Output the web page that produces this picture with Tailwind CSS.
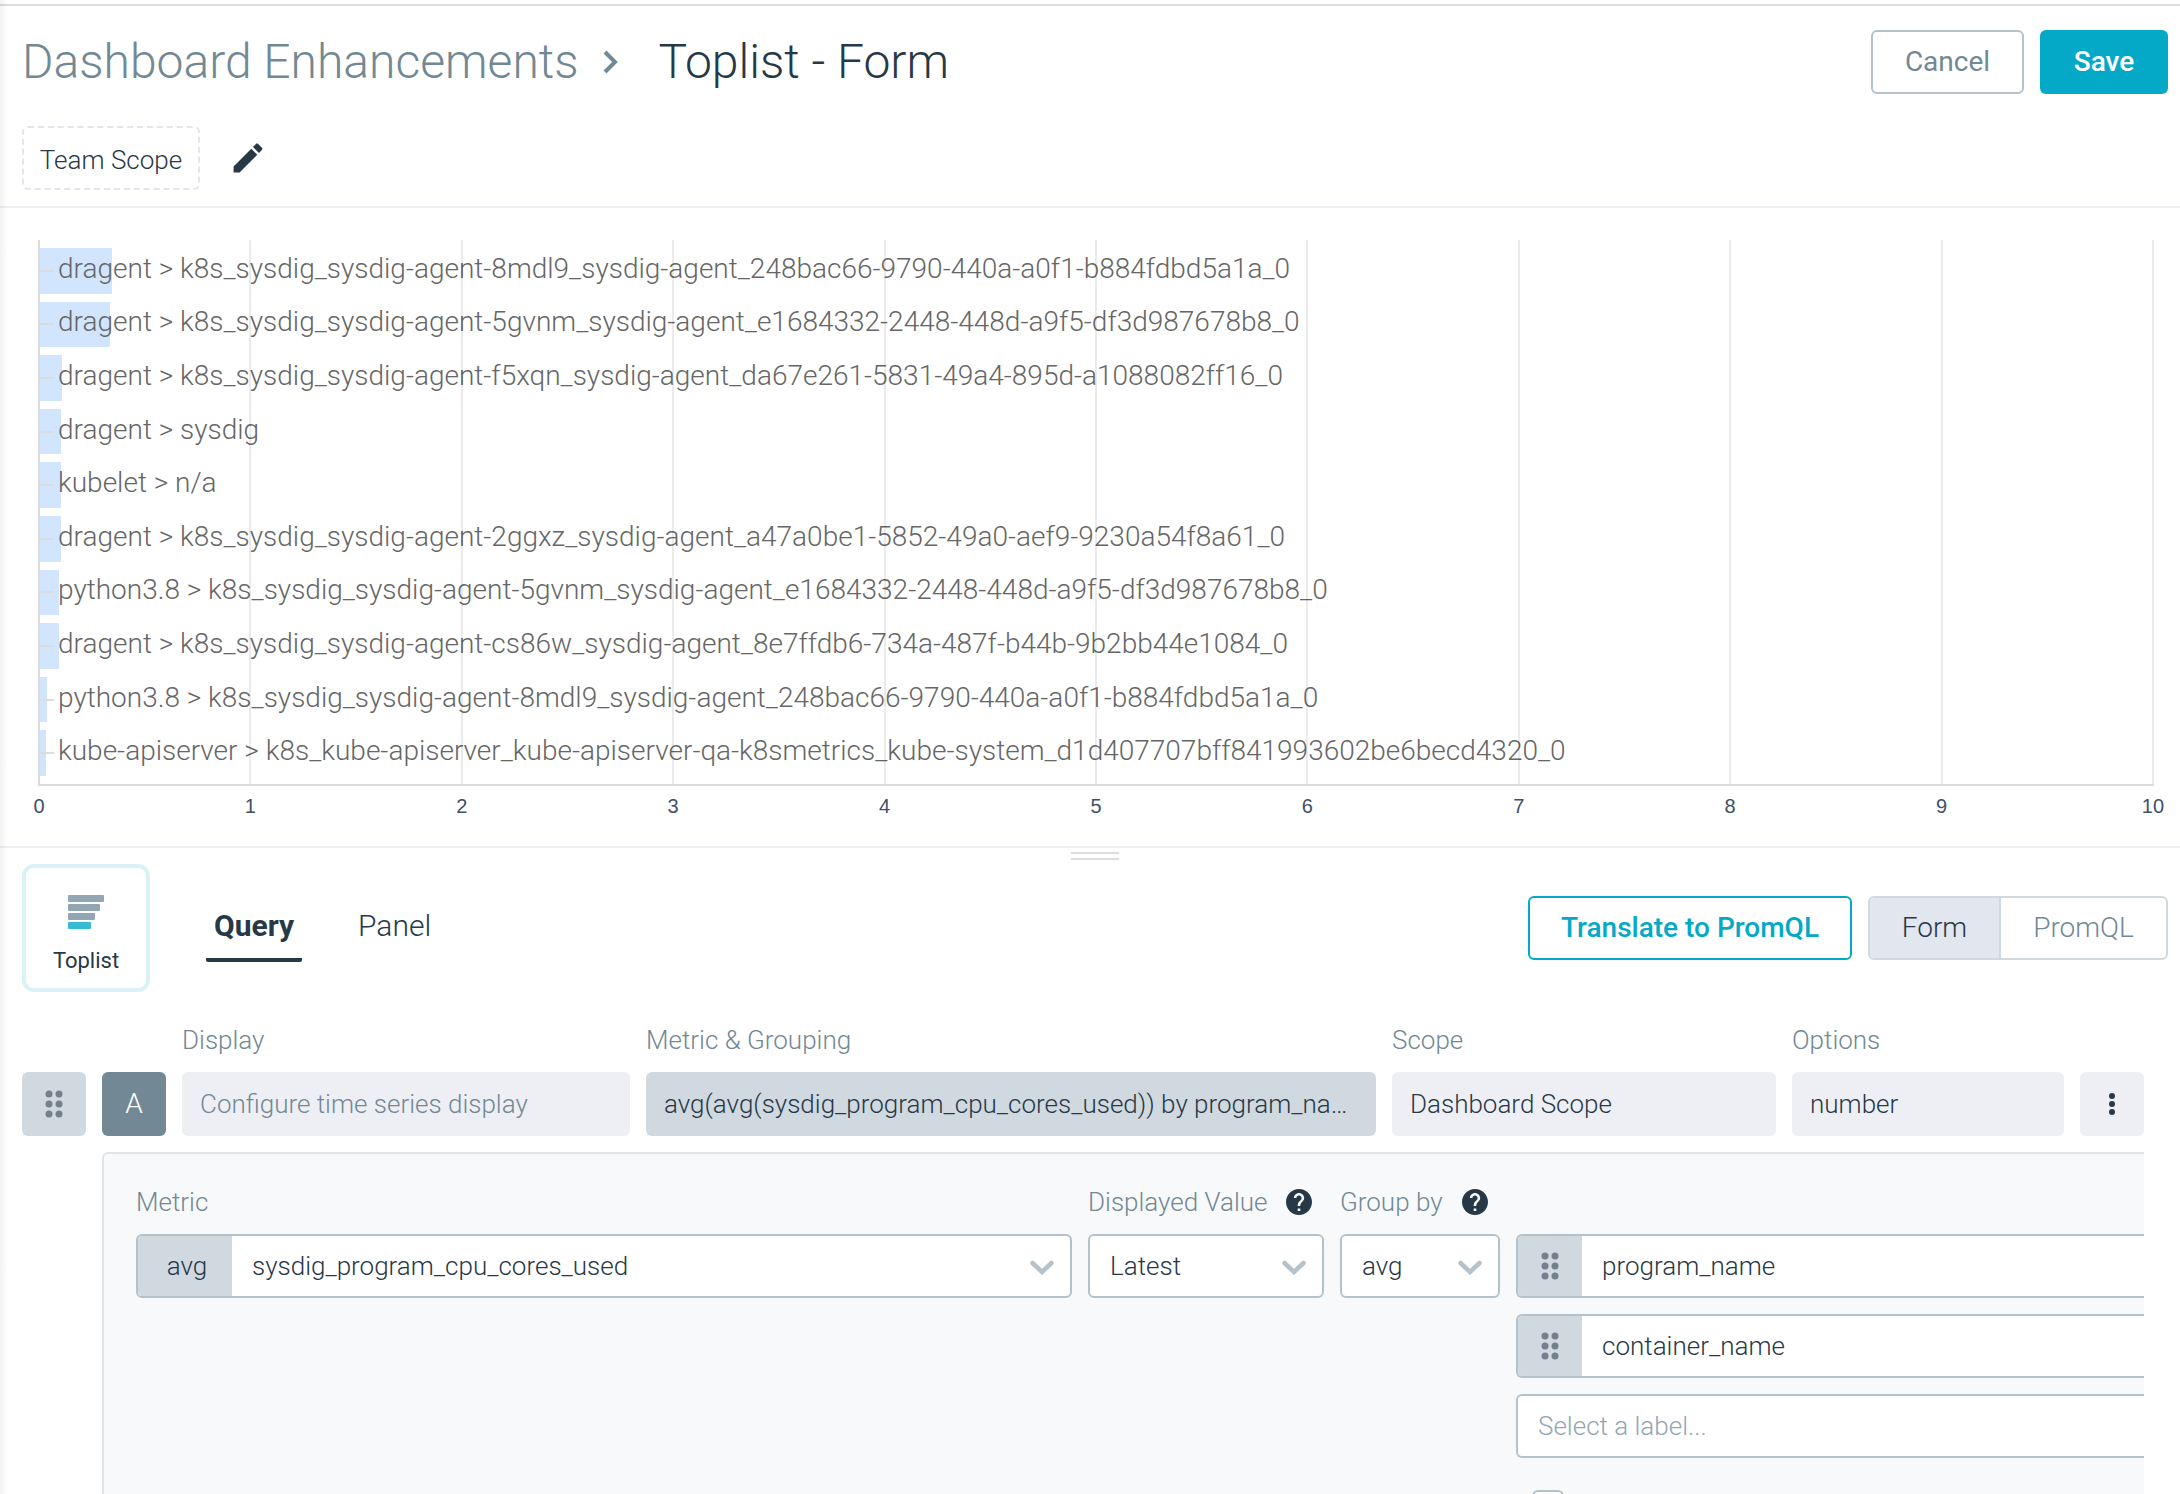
<!DOCTYPE html>
<html lang="en">
<head>
<meta charset="utf-8">
<title>Toplist - Form</title>
<script src="https://cdn.jsdelivr.net/npm/@tailwindcss/browser@4"></script>
</head>
<body class="h-screen overflow-hidden bg-white font-['Roboto',sans-serif] text-[26px] leading-8 font-light text-[#273847]">
<svg class="hidden">
  <symbol id="grip" viewBox="0 0 18 28"><g fill="#74808b"><circle cx="4" cy="4" r="3.5"/><circle cx="14" cy="4" r="3.5"/><circle cx="4" cy="14" r="3.5"/><circle cx="14" cy="14" r="3.5"/><circle cx="4" cy="24" r="3.5"/><circle cx="14" cy="24" r="3.5"/></g></symbol>
  <symbol id="chevron" viewBox="0 0 24 16"><path d="M2.500 3 12 12 21.500 3" fill="none" stroke="#b4c2cb" stroke-width="4.500" stroke-linecap="round"/></symbol>
  <symbol id="help" viewBox="2 2 20 20"><path fill="#273847" d="M12 2C6.480 2 2 6.480 2 12s4.480 10 10 10 10-4.480 10-10S17.520 2 12 2zm1 17h-2v-2h2v2zm2.070-7.750-.9.920C13.450 12.900 13 13.500 13 15h-2v-.5c0-1.100.450-2.100 1.170-2.830l1.240-1.260c.370-.360.590-.860.590-1.410 0-1.100-.9-2-2-2s-2 .9-2 2H8c0-2.210 1.790-4 4-4s4 1.790 4 4c0 .880-.360 1.680-.930 2.250z"/></symbol>
</svg>
<div class="relative flex h-full flex-col overflow-hidden pt-1">
  <div class="absolute inset-y-0 left-0 w-2 bg-linear-to-r from-black/5 to-transparent"></div>

  <header class="shrink-0 border-t-2 border-b-2 border-t-[#dcdcdc] border-b-[#eeeff4] pt-6 pr-3 pb-4 pl-[22px]">
    <div class="flex items-center justify-between">
      <nav class="flex items-center text-[48px] leading-16">
        <a href="#" class="text-[#728894]">Dashboard Enhancements</a>
        <svg class="mr-10 ml-6 h-6 w-4" viewBox="0 0 16 24" fill="none" stroke="#728894" stroke-width="4"><path d="M2 2 12 12 2 22"/></svg>
        <h1>Toplist - Form</h1>
      </nav>
      <div class="flex gap-4 text-[28px]">
        <button class="h-16 w-[153px] rounded-md border-2 border-[#b4c2cb] font-normal text-[#728894]">Cancel</button>
        <button class="h-16 w-32 rounded-md bg-[#04a9c7] font-medium text-white">Save</button>
      </div>
    </div>
    <div class="mt-8 flex items-center gap-8">
      <button class="h-16 w-[178px] rounded-md border-2 border-dashed border-[#e1e6ec] pt-1">Team Scope</button>
      <button aria-label="Edit scope"><svg class="size-8" viewBox="2 2 20 20"><path fill="#273847" d="M3 17.250V21h3.750L17.810 9.940l-3.750-3.750L3 17.250zM20.710 7.040c.390-.390.390-1.020 0-1.410l-2.340-2.340c-.390-.390-1.020-.390-1.410 0l-1.830 1.830 3.750 3.750 1.830-1.830z"/></svg></button>
    </div>
  </header>

  <section aria-label="Top list chart" class="shrink-0 border-b-2 border-[#eeeff4] pt-8 pr-[26px] pb-[26px] pl-[38px]">
    <div class="relative">
      <ul id="rows" class="grid h-[546px] grid-rows-10 border-b-2 border-l-2 border-[#dcdcdc] py-1 text-[28px] text-[#666]"></ul>
      <div class="absolute inset-0 bottom-0.5 left-0.5 grid grid-cols-10">
        <i class="border-r-2 border-black/8"></i><i class="border-r-2 border-black/8"></i><i class="border-r-2 border-black/8"></i><i class="border-r-2 border-black/8"></i><i class="border-r-2 border-black/8"></i><i class="border-r-2 border-black/8"></i><i class="border-r-2 border-black/8"></i><i class="border-r-2 border-black/8"></i><i class="border-r-2 border-black/8"></i><i class="border-r-2 border-black/8"></i>
      </div>
    </div>
    <div id="ticks" class="mx-px mt-1.5 flex justify-between font-['Liberation_Sans',sans-serif] text-[20px] leading-7 font-normal text-[#3f5068]"></div>
  </section>

  <main class="min-h-0 grow pl-[22px]">
    <div class="flex justify-center pt-1 pr-3"><div class="h-2 w-12 border-y-2 border-[#dcdcdc]"></div></div>
    <div class="mt-1 flex items-center pr-3">
      <button class="flex size-32 flex-col items-center rounded-xl border-4 border-[#d9f2f5] pt-[27px] text-[22px] leading-7 font-normal">
        <svg class="h-[34px] w-9" viewBox="0 0 36 34"><g fill="#92a6b3"><rect width="36" height="7" rx="1"/><rect y="9" width="32" height="7" rx="1"/><rect y="18" width="27" height="7" rx="1"/></g><rect y="27" width="23" height="7" rx="1" fill="#35bbd3"/></svg>
        <span class="mt-[18px]">Toplist</span>
      </button>
      <nav class="ml-14 flex gap-14 pt-2 text-[30px] leading-10">
        <a href="#" class="rounded-xs border-b-4 border-[#273847] px-2 pt-1 pb-3 font-bold">Query</a>
        <a href="#" class="pt-1">Panel</a>
      </nav>
      <div class="ml-auto flex gap-4 text-[28px]">
        <button class="h-16 w-[324px] rounded-md border-2 border-[#04a9c7] font-medium text-[#04a9c7]">Translate to PromQL</button>
        <div class="flex h-16 overflow-hidden rounded-md border-2 border-[#d0d8e0]">
          <button class="w-[131px] border-r-2 border-[#d0d8e0] bg-[#e2e6ee]">Form</button>
          <button class="w-[165px] text-[#728894]">PromQL</button>
        </div>
      </div>
    </div>

    <div class="mt-8 mr-9 grid grid-cols-[64px_64px_448fr_730fr_384fr_272fr_64px] gap-4">
      <span class="col-start-3 text-[#728894]">Display</span>
      <span class="text-[#728894]">Metric &amp; Grouping</span>
      <span class="text-[#728894]">Scope</span>
      <span class="text-[#728894]">Options</span>
      <button aria-label="Reorder query" class="col-start-1 flex h-16 items-center justify-center rounded-md bg-[#d0d8e0]"><svg class="h-7 w-[18px]"><use href="#grip"/></svg></button>
      <button class="h-16 rounded-md bg-[#728894] text-[28px] text-white">A</button>
      <button class="h-16 truncate rounded-md bg-[#eeeff4] px-[18px] text-left text-[#728894]">Configure time series display</button>
      <button class="h-16 truncate rounded-md bg-[#d0d8e0] px-[18px] text-left">avg(avg(sysdig_program_cpu_cores_used)) by program_na…</button>
      <button class="h-16 truncate rounded-md bg-[#eeeff4] px-[18px] text-left">Dashboard Scope</button>
      <button class="h-16 truncate rounded-md bg-[#eeeff4] px-[18px] text-left">number</button>
      <button aria-label="More" class="flex h-16 items-center justify-center rounded-md bg-[#eeeff4]"><svg class="h-6 w-2" viewBox="0 0 8 24" fill="#273847"><circle cx="4" cy="4" r="3"/><circle cx="4" cy="12" r="3"/><circle cx="4" cy="20" r="3"/></svg></button>
    </div>

    <div class="mt-4 mr-9 ml-20 flex h-96 gap-4 overflow-hidden rounded-tl-md border-t-2 border-l-2 border-[#dfe5e9] bg-[#f7f9fb] pt-8 pl-8">
      <div class="min-w-0 grow">
        <label for="metric" class="block text-[#728894]">Metric</label>
        <div class="mt-4 flex h-16 overflow-hidden rounded-md border-2 border-[#b4c2cb] bg-white">
          <button class="w-[94px] shrink-0 bg-[#d0d8e0] pl-1">avg</button>
          <div class="relative grow">
            <select id="metric" class="size-full appearance-none pl-5"><option>sysdig_program_cpu_cores_used</option></select>
            <svg class="pointer-events-none absolute top-6 right-4 h-4 w-6"><use href="#chevron"/></svg>
          </div>
        </div>
      </div>
      <div class="w-[236px] shrink-0">
        <div class="flex items-center justify-between pr-3 text-[#728894]"><label for="value">Displayed Value</label><svg class="size-[26px]"><use href="#help"/></svg></div>
        <div class="relative mt-4 h-16">
          <select id="value" class="size-full appearance-none rounded-md border-2 border-[#b4c2cb] bg-white pl-5"><option>Latest</option></select>
          <svg class="pointer-events-none absolute top-6 right-[18px] mt-0.5 h-4 w-6"><use href="#chevron"/></svg>
        </div>
      </div>
      <div class="w-[160px] shrink-0">
        <div class="flex items-center justify-between pr-3 text-[#728894]"><label for="group">Group by</label><svg class="size-[26px]"><use href="#help"/></svg></div>
        <div class="relative mt-4 h-16">
          <select id="group" class="size-full appearance-none rounded-md border-2 border-[#b4c2cb] bg-white pl-5"><option>avg</option></select>
          <svg class="pointer-events-none absolute top-6 right-[18px] mt-0.5 h-4 w-6"><use href="#chevron"/></svg>
        </div>
      </div>
      <div class="flex w-[628px] shrink-0 flex-col gap-4 pt-12">
        <div class="flex h-16 shrink-0 overflow-hidden rounded-l-md border-2 border-r-0 border-[#b4c2cb] bg-white">
          <button aria-label="Reorder label" class="flex w-16 shrink-0 items-center justify-center bg-[#d0d8e0]"><svg class="h-7 w-[18px]"><use href="#grip"/></svg></button>
          <input aria-label="First label" class="min-w-0 grow pl-5" value="program_name">
        </div>
        <div class="flex h-16 shrink-0 overflow-hidden rounded-l-md border-2 border-r-0 border-[#b4c2cb] bg-white">
          <button aria-label="Reorder label" class="flex w-16 shrink-0 items-center justify-center bg-[#d0d8e0]"><svg class="h-7 w-[18px]"><use href="#grip"/></svg></button>
          <input aria-label="Second label" class="min-w-0 grow pl-5" value="container_name">
        </div>
        <input aria-label="Add label" class="h-16 shrink-0 rounded-l-md border-2 border-r-0 border-[#b4c2cb] bg-white pl-5 placeholder:text-[#92a6b3]" placeholder="Select a label...">
        <input type="checkbox" aria-label="Option" class="mt-4 ml-4 size-8 shrink-0 appearance-none rounded-md border-2 border-[#b4c2cb] bg-white">
      </div>
    </div>
  </main>
</div>
<script>
const data = [
  [0.34, 'dragent > k8s_sysdig_sysdig-agent-8mdl9_sysdig-agent_248bac66-9790-440a-a0f1-b884fdbd5a1a_0'],
  [0.33, 'dragent > k8s_sysdig_sysdig-agent-5gvnm_sysdig-agent_e1684332-2448-448d-a9f5-df3d987678b8_0'],
  [0.105, 'dragent > k8s_sysdig_sysdig-agent-f5xqn_sysdig-agent_da67e261-5831-49a4-895d-a1088082ff16_0'],
  [0.101, 'dragent > sysdig'],
  [0.1, 'kubelet > n/a'],
  [0.1, 'dragent > k8s_sysdig_sysdig-agent-2ggxz_sysdig-agent_a47a0be1-5852-49a0-aef9-9230a54f8a61_0'],
  [0.092, 'python3.8 > k8s_sysdig_sysdig-agent-5gvnm_sysdig-agent_e1684332-2448-448d-a9f5-df3d987678b8_0'],
  [0.09, 'dragent > k8s_sysdig_sysdig-agent-cs86w_sysdig-agent_8e7ffdb6-734a-487f-b44b-9b2bb44e1084_0'],
  [0.034, 'python3.8 > k8s_sysdig_sysdig-agent-8mdl9_sysdig-agent_248bac66-9790-440a-a0f1-b884fdbd5a1a_0'],
  [0.03, 'kube-apiserver > k8s_kube-apiserver_kube-apiserver-qa-k8smetrics_kube-system_d1d407707bff841993602be6becd4320_0'],
];
document.getElementById('rows').innerHTML = data.map(([v, name]) =>
  `<li class="relative flex items-center py-1"><div class="h-full bg-[#d1e5ff]" style="width:${v * 10}%"></div>` +
  `<div class="absolute left-0 h-0.5 w-3.5 bg-[#dcdcdc]"></div><span class="absolute left-[18px] pb-1 whitespace-nowrap">${name.replace('>', '&gt;')}</span></li>`).join('');
document.getElementById('ticks').innerHTML = Array.from({length: 11}, (_, i) =>
  `<span class="flex w-0 justify-center">${i}</span>`).join('');
</script>
</body>
</html>
